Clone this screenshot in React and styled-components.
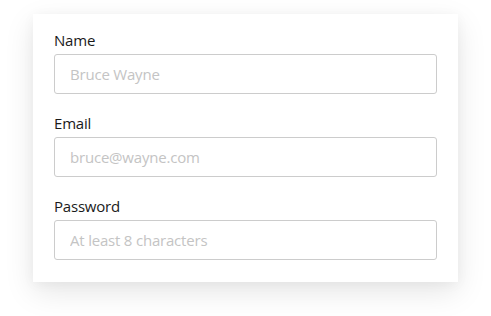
import React from "react";
import styled, { createGlobalStyle } from "styled-components";

const Global = createGlobalStyle`
  html, body { margin: 0; padding: 0; background: #ffffff; }
  body { font-family: "Open Sans", "Noto Sans", sans-serif; }
  * { box-sizing: border-box; }
`;

const Page = styled.div`
  display: flex;
  justify-content: center;
  align-items: flex-start;
  min-height: 316px;
  padding: 14px 0 34px;
`;

const Card = styled.form`
  width: 425px;
  background: #ffffff;
  padding: 16px 21px 22px;
  box-shadow: 0 10px 28px rgba(0, 0, 0, 0.1), 0 2px 12px rgba(0, 0, 0, 0.04);
  display: flex;
  flex-direction: column;
  gap: 19px;
`;

const Field = styled.label`
  display: flex;
  flex-direction: column;
  gap: 4px;
`;

const LabelText = styled.span`
  font-size: 15px;
  line-height: 20px;
  color: #1a1a1a;
  letter-spacing: -0.2px;
`;

const Input = styled.input`
  height: 40px;
  width: 100%;
  border: 1px solid #cccccc;
  border-radius: 3px;
  padding: 0 15px;
  font-family: inherit;
  font-size: 15px;
  color: #222;
  letter-spacing: -0.2px;
  outline: none;
  &::placeholder { color: #c4c4c4; }
`;

const fields = [
  { label: "Name", type: "text", placeholder: "Bruce Wayne" },
  { label: "Email", type: "email", placeholder: "bruce@wayne.com" },
  { label: "Password", type: "password", placeholder: "At least 8 characters" },
];

export default function App() {
  return (
    <>
      <Global />
      <Page>
        <Card onSubmit={(e) => e.preventDefault()}>
          {fields.map((f) => (
            <Field key={f.label}>
              <LabelText>{f.label}</LabelText>
              <Input type={f.type} placeholder={f.placeholder} />
            </Field>
          ))}
        </Card>
      </Page>
    </>
  );
}
